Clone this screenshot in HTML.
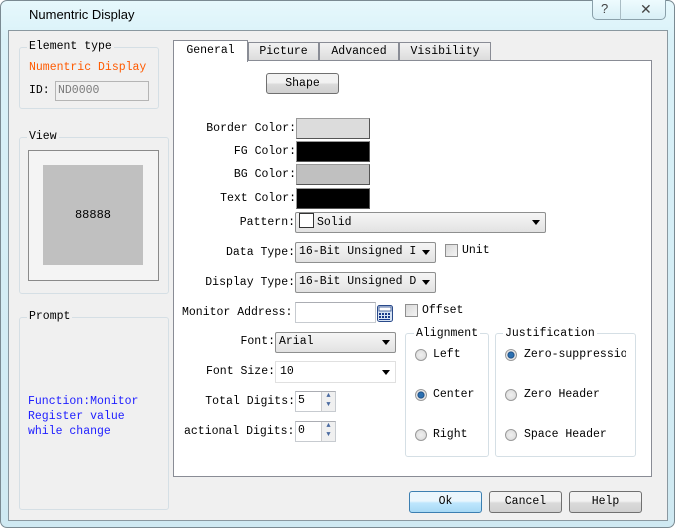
<!DOCTYPE html>
<html><head><meta charset="utf-8"><style>
*{box-sizing:border-box;margin:0;padding:0}
body{width:675px;height:528px;background:#fff;position:relative;overflow:hidden;font-family:"Liberation Mono","Noto Sans CJK SC",monospace;font-size:11.5px;color:#000}
.a{position:absolute}
.frame{left:0;top:0;width:675px;height:528px;border:1px solid #7a8a92;border-radius:7px;background:linear-gradient(#e6f8fc,#d9f1f8 40px,#cfe9f2);}
.client{left:8px;top:30px;width:660px;height:491px;background:#f0f0f0;border:1px solid #8a98a0}
.grp{border:1px solid #d5dfe5;border-radius:3px}
.leg{background:#f0f0f0;padding:0 2px;line-height:13px}
.lbl{text-align:right;line-height:14px;white-space:nowrap}
.sw{border:1px solid #999;border-right-color:#555;border-bottom-color:#555;height:21px;width:74px}
.combo{border:1px solid #8e8f8f;border-radius:2px;background:linear-gradient(#f6f6f6,#e2e2e2);line-height:18px;padding-left:3px;white-space:nowrap;overflow:hidden}
.arr{position:absolute;right:5px;top:7px;width:0;height:0;border-left:4px solid transparent;border-right:4px solid transparent;border-top:5px solid #000}
.inp{background:#fff;border:1px solid #c7cbd0;border-top-color:#abadb3}
.btn{border:1px solid #707070;border-radius:3px;background:linear-gradient(#f2f2f2 45%,#dadada 55%,#d0d0d0);text-align:center;line-height:19px}
.rad{width:12px;height:12px;border-radius:50%;border:1px solid #9a9a9a;background:radial-gradient(#f0f0f0,#d8d8d8)}
.rad.on{background:radial-gradient(#2a6fb0 30%,#1a4a80 45%,#e8e8e8 55%)}
.chk{width:13px;height:13px;border:1px solid #8f8f8f;background:linear-gradient(135deg,#d8d8d8,#f4f4f4)}
.spin{position:absolute;right:0;top:0;width:14px;height:100%;border-left:1px solid #ccc;background:#f0f0f0;font-size:7px;color:#4a6aa0;text-align:center;line-height:9px}
</style></head><body>
<div class="a frame"></div>
<div class="a" style="left:29px;top:7px;font-family:'Liberation Sans',sans-serif;font-size:13px;color:#000">Numentric Display</div>
<div class="a" style="left:592px;top:0;width:74px;height:20px;border:1px solid #8aa0aa;border-top:none;border-radius:0 0 5px 5px;background:linear-gradient(#eefbfe,#d8eff6)"></div>
<div class="a" style="left:620px;top:0;width:1px;height:20px;background:#a9bcc4"></div>
<div class="a" style="left:601px;top:1px;font-family:'Liberation Sans',sans-serif;font-size:13px;color:#444">?</div>
<div class="a" style="left:640px;top:1px;font-family:'Liberation Sans',sans-serif;font-size:14px;color:#444">✕</div>
<div class="a client"></div>

<!-- Element type -->
<div class="a grp" style="left:19px;top:47px;width:140px;height:62px"></div>
<div class="a leg" style="left:27px;top:40px">Element type</div>
<div class="a" style="left:29px;top:61px;color:#ff5a00">Numentric Display</div>
<div class="a" style="left:29px;top:84px">ID:</div>
<div class="a" style="left:55px;top:81px;width:94px;height:20px;border:1px solid #b5b5b5;background:#f0f0f0;color:#7a7a7a;padding:2px 2px;line-height:14px">ND0000</div>

<!-- View -->
<div class="a grp" style="left:19px;top:137px;width:150px;height:157px"></div>
<div class="a leg" style="left:27px;top:130px">View</div>
<div class="a" style="left:28px;top:150px;width:131px;height:131px;border:1px solid #8a8a8a;background:#f4f4f4"></div>
<div class="a" style="left:43px;top:165px;width:100px;height:100px;background:#c0c0c0;text-align:center;line-height:100px;font-size:12px">88888</div>

<!-- Prompt -->
<div class="a grp" style="left:19px;top:317px;width:150px;height:193px"></div>
<div class="a leg" style="left:27px;top:310px">Prompt</div>
<div class="a" style="left:28px;top:394px;color:#2020ff;line-height:15px">Function:Monitor<br>Register value<br>while change</div>

<!-- Tabs -->
<div class="a" style="left:173px;top:60px;width:479px;height:417px;background:#fff;border:1px solid #898c95"></div>
<div class="a" style="left:248px;top:42px;width:71px;height:19px;border:1px solid #898c95;background:linear-gradient(#f2f2f2,#dcdcdc);text-align:center;line-height:17px">Picture</div>
<div class="a" style="left:319px;top:42px;width:80px;height:19px;border:1px solid #898c95;background:linear-gradient(#f2f2f2,#dcdcdc);text-align:center;line-height:17px">Advanced</div>
<div class="a" style="left:399px;top:42px;width:92px;height:19px;border:1px solid #898c95;background:linear-gradient(#f2f2f2,#dcdcdc);text-align:center;line-height:17px">Visibility</div>
<div class="a" style="left:173px;top:40px;width:75px;height:22px;border:1px solid #898c95;border-bottom:none;background:#fff;text-align:center;line-height:20px">General</div>

<div class="a btn" style="left:266px;top:73px;width:73px;height:21px">Shape</div>

<div class="a lbl" style="left:180px;top:122px;width:116px">Border Color:</div>
<div class="a sw" style="left:296px;top:118px;background:#dcdcdc"></div>
<div class="a lbl" style="left:180px;top:145px;width:116px">FG Color:</div>
<div class="a sw" style="left:296px;top:141px;background:#000"></div>
<div class="a lbl" style="left:180px;top:168px;width:116px">BG Color:</div>
<div class="a sw" style="left:296px;top:164px;background:#c0c0c0"></div>
<div class="a lbl" style="left:180px;top:192px;width:116px">Text Color:</div>
<div class="a sw" style="left:296px;top:188px;background:#000"></div>

<div class="a lbl" style="left:180px;top:216px;width:115px">Pattern:</div>
<div class="a combo" style="left:295px;top:212px;width:251px;height:21px"><span style="display:inline-block;width:15px;height:15px;border:1px solid #333;background:#fff;vertical-align:-3px;margin-right:3px"></span>Solid<span class="arr"></span></div>

<div class="a lbl" style="left:180px;top:246px;width:115px">Data Type:</div>
<div class="a combo" style="left:295px;top:242px;width:141px;height:21px">16-Bit Unsigned I<span class="arr" style="background:transparent"></span></div>
<div class="a chk" style="left:445px;top:244px"></div>
<div class="a" style="left:462px;top:244px">Unit</div>

<div class="a lbl" style="left:180px;top:276px;width:115px">Display Type:</div>
<div class="a combo" style="left:295px;top:272px;width:141px;height:21px">16-Bit Unsigned D<span class="arr"></span></div>

<div class="a lbl" style="left:182px;top:306px;width:113px;text-align:left">Monitor Address:</div>
<div class="a inp" style="left:295px;top:302px;width:81px;height:21px"></div>
<svg class="a" style="left:377px;top:305px" width="17" height="18" viewBox="0 0 17 18"><rect x="0.5" y="0.5" width="15" height="16" rx="2" fill="#d8e4f4" stroke="#2a4a8a"/><rect x="2" y="2" width="12" height="4" fill="#fff" stroke="#2a4a8a" stroke-width=".8"/><g fill="#1a3a8a"><rect x="2" y="8" width="2" height="2"/><rect x="5" y="8" width="2" height="2"/><rect x="8" y="8" width="2" height="2"/><rect x="11" y="8" width="2" height="2"/><rect x="2" y="11" width="2" height="2"/><rect x="5" y="11" width="2" height="2"/><rect x="8" y="11" width="2" height="2"/><rect x="11" y="11" width="2" height="2"/><rect x="2" y="14" width="11" height="1"/></g></svg>
<div class="a chk" style="left:405px;top:304px"></div>
<div class="a" style="left:422px;top:304px">Offset</div>

<div class="a lbl" style="left:180px;top:335px;width:95px">Font:</div>
<div class="a combo" style="left:275px;top:332px;width:121px;height:21px">Arial<span class="arr"></span></div>
<div class="a lbl" style="left:180px;top:365px;width:95px">Font Size:</div>
<div class="a inp" style="left:275px;top:361px;width:121px;height:22px;padding:3px 4px;line-height:14px;border-color:#e0e0e0">10<span class="arr" style="top:8px"></span></div>

<div class="a lbl" style="left:180px;top:395px;width:115px">Total Digits:</div>
<div class="a inp" style="left:295px;top:391px;width:41px;height:21px;padding:2px 2px;line-height:14px">5<div class="spin">▲<br>▼</div></div>
<div class="a lbl" style="left:184px;top:425px;width:111px;text-align:left">actional Digits:</div>
<div class="a inp" style="left:295px;top:421px;width:41px;height:21px;padding:2px 2px;line-height:14px">0<div class="spin">▲<br>▼</div></div>

<div class="a grp" style="left:405px;top:333px;width:84px;height:124px;background:#fff"></div>
<div class="a leg" style="left:414px;top:327px;background:#fff">Alignment</div>
<div class="a rad" style="left:415px;top:349px"></div><div class="a" style="left:433px;top:348px">Left</div>
<div class="a rad on" style="left:415px;top:389px"></div><div class="a" style="left:433px;top:388px">Center</div>
<div class="a rad" style="left:415px;top:429px"></div><div class="a" style="left:433px;top:428px">Right</div>

<div class="a grp" style="left:495px;top:333px;width:141px;height:124px;background:#fff"></div>
<div class="a leg" style="left:503px;top:327px;background:#fff">Justification</div>
<div class="a rad on" style="left:505px;top:349px"></div><div class="a" style="left:524px;top:348px;width:102px;overflow:hidden;white-space:nowrap">Zero-suppression</div>
<div class="a rad" style="left:505px;top:389px"></div><div class="a" style="left:524px;top:388px">Zero Header</div>
<div class="a rad" style="left:505px;top:429px"></div><div class="a" style="left:524px;top:428px">Space Header</div>

<div class="a btn" style="left:409px;top:491px;width:73px;height:22px;border-color:#3c7fb1;background:linear-gradient(#eaf6fd 45%,#bee6fd 55%,#a7d9f5)">Ok</div>
<div class="a btn" style="left:489px;top:491px;width:73px;height:22px">Cancel</div>
<div class="a btn" style="left:569px;top:491px;width:73px;height:22px">Help</div>
</body></html>
